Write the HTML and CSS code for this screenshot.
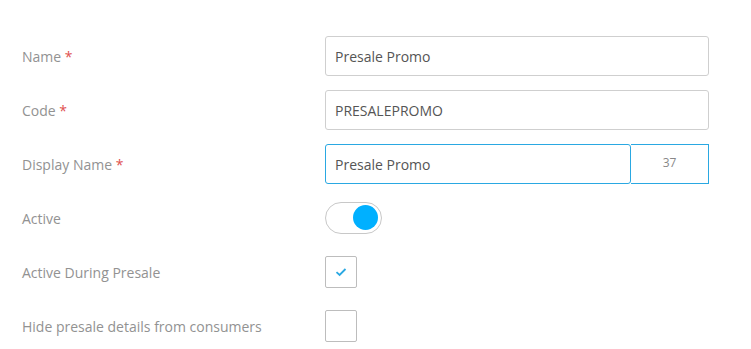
FILE: index.html
```html
<!DOCTYPE html>
<html lang="en">

<head>
    <meta charset="UTF-8">
    <meta name="viewport" content="width=device-width, initial-scale=1.0">
    <title>Promo Code</title>
    <link rel="stylesheet" href="styles.css">
</head>

<body>
    <form class="promo-form">
        <div class="row">
            <label class="label" for="name">Name <span class="req">*</span></label>
            <div class="field">
                <input class="text-input" type="text" id="name" value="Presale Promo">
            </div>
        </div>

        <div class="row">
            <label class="label" for="code">Code <span class="req">*</span></label>
            <div class="field">
                <input class="text-input" type="text" id="code" value="PRESALEPROMO">
            </div>
        </div>

        <div class="row">
            <label class="label" for="displayName">Display Name <span class="req">*</span></label>
            <div class="field counter-group">
                <input class="text-input focused" type="text" id="displayName" value="Presale Promo">
                <span class="counter">37</span>
            </div>
        </div>

        <div class="row">
            <span class="label">Active</span>
            <div class="field">
                <span class="toggle on"><span class="knob"></span></span>
            </div>
        </div>

        <div class="row">
            <span class="label">Active During Presale</span>
            <div class="field">
                <span class="checkbox">
                    <svg width="12" height="10" viewBox="0 0 12 10">
                        <path d="M1.5 5.2 L4.6 8 L10.5 2" fill="none" stroke="#2aa8e2" stroke-width="1.8" />
                    </svg>
                </span>
            </div>
        </div>

        <div class="row">
            <span class="label">Hide presale details from consumers</span>
            <div class="field">
                <span class="checkbox"></span>
            </div>
        </div>
    </form>
</body>

</html>
```

FILE: styles.css
```css
body {
    margin: 0;
    font-family: "Open Sans", Arial, sans-serif;
    background: #fff;
    color: #555;
}

.promo-form {
    padding: 36px 0 0 22px;
}

.row {
    display: flex;
    align-items: center;
    height: 40px;
    margin-bottom: 14px;
}

.label {
    width: 303px;
    font-size: 14px;
    color: #929292;
}

.req {
    color: #e0504f;
}

.field {
    display: flex;
    align-items: center;
    width: 384px;
}

.text-input {
    width: 100%;
    height: 40px;
    box-sizing: border-box;
    padding: 0 9px;
    border: 1px solid #cfcfcf;
    border-radius: 3px;
    font-family: "Open Sans", Arial, sans-serif;
    font-size: 14px;
    color: #555;
    outline: none;
}

.text-input.focused {
    border-color: #2aa8e2;
}

.counter-group .text-input {
    flex: 1;
}

.counter {
    box-sizing: border-box;
    width: 78px;
    height: 40px;
    line-height: 36px;
    border: 1px solid #2aa8e2;
    border-left: none;
    text-align: center;
    font-size: 12px;
    color: #888;
}

.toggle {
    position: relative;
    display: inline-block;
    box-sizing: border-box;
    width: 57px;
    height: 32px;
    border: 1px solid #c8c8c8;
    border-radius: 16px;
    background: #fff;
}

.toggle .knob {
    position: absolute;
    top: 2px;
    right: 3px;
    width: 25px;
    height: 25px;
    border-radius: 50%;
    background: #00b0ff;
}

.checkbox {
    display: flex;
    align-items: center;
    justify-content: center;
    box-sizing: border-box;
    width: 32px;
    height: 32px;
    border: 1px solid #bdbdbd;
    border-radius: 2px;
    background: #fff;
}
```
